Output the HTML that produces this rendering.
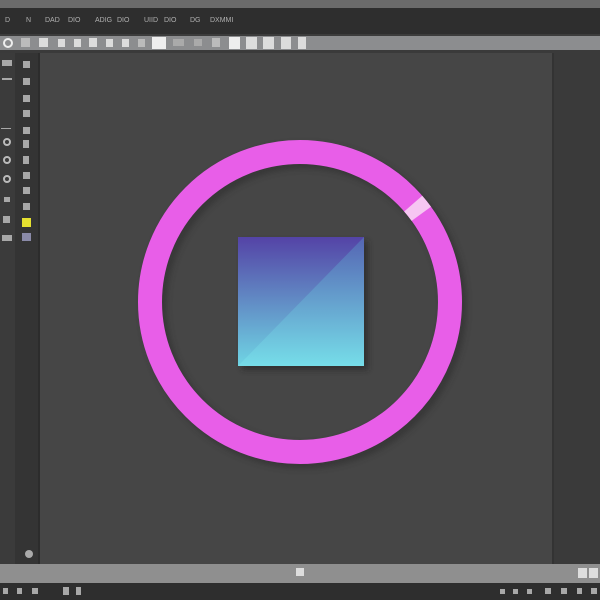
<!DOCTYPE html>
<html><head><style>
html,body{margin:0;padding:0;width:600px;height:600px;overflow:hidden;background:#464646;font-family:"Liberation Sans",sans-serif}
</style></head><body>
<svg width="600" height="600" viewBox="0 0 600 600" xmlns="http://www.w3.org/2000/svg">
<defs>
<linearGradient id="g" x1="0" y1="0" x2="0" y2="1"><stop offset="0" stop-color="#5443a6"/><stop offset="1" stop-color="#6fd5e4"/></linearGradient>
<linearGradient id="g2" x1="0" y1="0" x2="0" y2="1"><stop offset="0" stop-color="#5570b8"/><stop offset="1" stop-color="#78e0ea"/></linearGradient>
<filter id="sh" x="-20%" y="-20%" width="150%" height="150%"><feGaussianBlur stdDeviation="3"/></filter>
</defs>
<rect width="600" height="600" fill="#464646"/>
<rect width="600" height="8" fill="#6b6b6b"/>
<rect y="8" width="600" height="27" fill="#2e2e2e"/>
<rect y="34" width="600" height="2" fill="#3c3c3c"/>
<rect y="36" width="600" height="14" fill="#8c8d8f"/>
<rect y="50" width="600" height="3" fill="#3a3a3a"/>
<rect x="0" y="53" width="15" height="512" fill="#3b3b3b"/>
<rect x="15" y="53" width="24" height="512" fill="#343434"/>
<rect x="38" y="53" width="2" height="512" fill="#2c2c2c"/>
<rect x="553" y="53" width="47" height="512" fill="#3a3a3a"/>
<rect x="552" y="53" width="2" height="512" fill="#333"/>
<rect y="564" width="600" height="19" fill="#8f8f8f"/>
<rect y="583" width="600" height="17" fill="#2e2e2e"/>
<g fill="#b0b0b0" font-size="7">
<text x="5" y="22">D</text><text x="26" y="22">N</text>
<text x="45" y="22">DAD</text><text x="68" y="22">DIO</text><text x="95" y="22">ADIG</text><text x="117" y="22">DIO</text><text x="144" y="22">UIID</text><text x="164" y="22">DIO</text><text x="190" y="22">DG</text><text x="210" y="22">DXMMI</text>
</g>
<g fill="#dcdcdc">
<circle cx="8" cy="43" r="4" fill="none" stroke="#eee" stroke-width="2"/>
<rect x="21" y="38" width="9" height="9" fill="#bbb"/>
<rect x="39" y="38" width="9" height="9"/><rect x="58" y="39" width="7" height="8"/><rect x="74" y="39" width="7" height="8"/><rect x="89" y="38" width="8" height="9"/><rect x="106" y="39" width="7" height="8"/><rect x="122" y="39" width="7" height="8"/><rect x="138" y="39" width="7" height="8" fill="#bbb"/>
<rect x="152" y="37" width="14" height="12" fill="#eee"/>
<rect x="173" y="39" width="11" height="7" fill="#aaa"/><rect x="194" y="39" width="8" height="7" fill="#aaa"/><rect x="212" y="38" width="8" height="9" fill="#bbb"/>
<rect x="229" y="37" width="11" height="12" fill="#eee"/><rect x="246" y="37" width="11" height="12"/><rect x="263" y="37" width="11" height="12"/><rect x="281" y="37" width="10" height="12"/><rect x="298" y="37" width="8" height="12"/>
</g>
<g fill="#a8a8a8">
<rect x="23" y="61" width="7" height="7"/><rect x="23" y="78" width="7" height="7"/><rect x="23" y="95" width="7" height="7"/><rect x="23" y="110" width="7" height="7"/><rect x="23" y="127" width="7" height="7"/><rect x="23" y="140" width="6" height="8"/><rect x="23" y="156" width="6" height="8"/><rect x="23" y="172" width="7" height="7"/><rect x="23" y="187" width="7" height="7"/><rect x="23" y="203" width="7" height="7"/>
<rect x="22" y="218" width="9" height="9" fill="#e5e030"/><rect x="22" y="233" width="9" height="8" fill="#8a8aa8"/>
<rect x="2" y="60" width="10" height="6"/><rect x="2" y="78" width="10" height="2"/><rect x="1" y="128" width="10" height="1"/>
<circle cx="7" cy="142" r="3" fill="none" stroke="#bbb" stroke-width="2"/><circle cx="7" cy="160" r="3" fill="none" stroke="#bbb" stroke-width="2"/><circle cx="7" cy="179" r="3" fill="none" stroke="#bbb" stroke-width="2"/>
<rect x="4" y="197" width="6" height="5"/><rect x="3" y="216" width="7" height="7"/><rect x="2" y="235" width="10" height="6"/>
<circle cx="29" cy="554" r="4" fill="#aaa"/>
<rect x="296" y="568" width="8" height="8" fill="#ddd"/><rect x="578" y="568" width="9" height="10" fill="#ddd"/><rect x="589" y="568" width="9" height="10" fill="#ddd"/>
<rect x="3" y="588" width="5" height="6"/><rect x="17" y="588" width="5" height="6"/><rect x="32" y="588" width="6" height="6"/><rect x="63" y="587" width="6" height="8"/><rect x="76" y="587" width="5" height="8"/>
<rect x="500" y="589" width="5" height="5"/><rect x="513" y="589" width="5" height="5"/><rect x="527" y="589" width="5" height="5"/><rect x="545" y="588" width="6" height="6"/><rect x="561" y="588" width="6" height="6"/><rect x="577" y="588" width="5" height="6"/><rect x="591" y="588" width="6" height="6"/>
</g>
<circle cx="304" cy="306" r="150" fill="none" stroke="#2a2a2a" stroke-width="26" opacity="0.5" filter="url(#sh)"/>
<circle cx="300" cy="302" r="150" fill="none" stroke="#e85ee8" stroke-width="24"/>
<circle cx="300" cy="302" r="150" fill="none" stroke="#f6c6f2" stroke-width="24" stroke-dasharray="13 930" transform="rotate(-41 300 302)"/>
<rect x="242" y="241" width="126" height="129" fill="#222" opacity="0.6" filter="url(#sh)"/>
<rect x="238" y="237" width="126" height="129" fill="url(#g)"/>
<polygon points="364,237 364,366 238,366" fill="url(#g2)" opacity="0.75"/>
</svg>
</body></html>
